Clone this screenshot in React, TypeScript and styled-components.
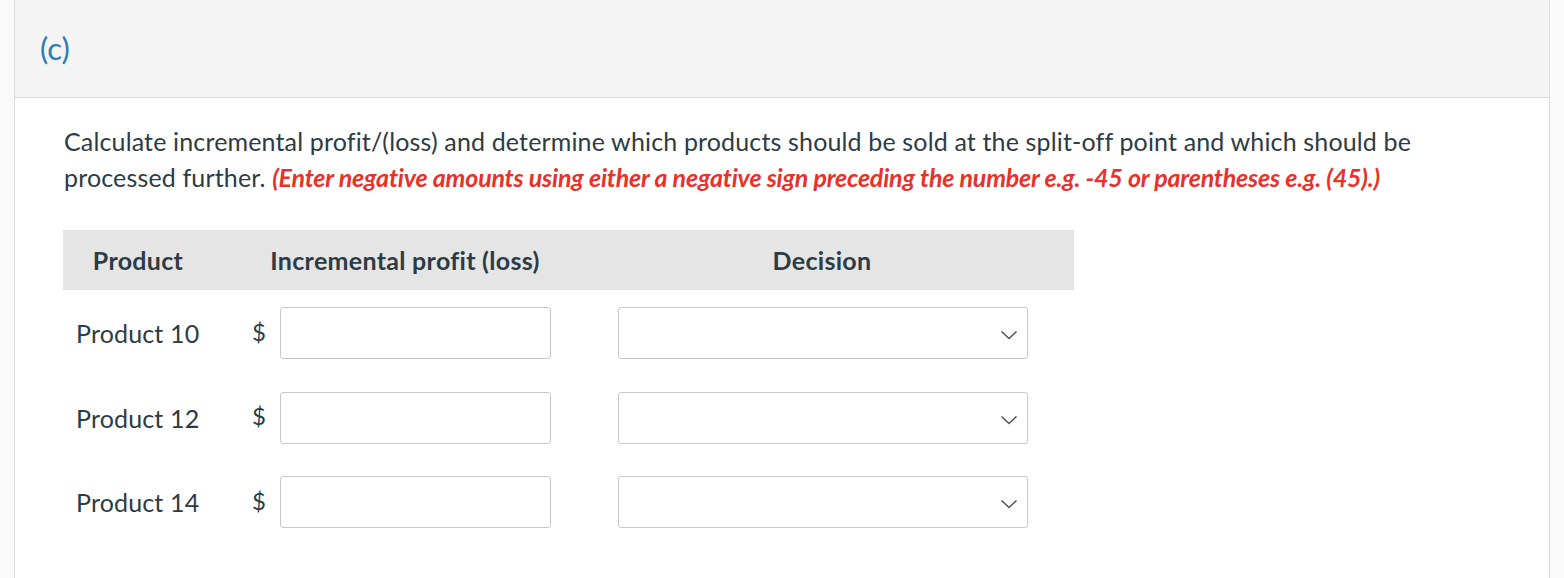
import React from "react";
import styled, { createGlobalStyle } from "styled-components";

const Global = createGlobalStyle`
  html, body { margin: 0; padding: 0; background: #fafafa; }
  body { font-family: Lato, "Open Sans", sans-serif; color: #2d3b45; }
`;

const Page = styled.div`
  padding-left: 14px;
  padding-right: 14px;
  height: 578px;
  box-sizing: border-box;
`;

const Card = styled.div`
  border-left: 1px solid #dcdcdc;
  border-right: 1px solid #dcdcdc;
  background: #fff;
  height: 100%;
`;

const Header = styled.div`
  background: #f4f4f4;
  border-bottom: 1px solid #dcdcdc;
  height: 98px;
  box-sizing: border-box;
  padding: 29px 0 0 25px;
`;

const PartLabel = styled.div`
  font-size: 31px;
  color: #2f7bb5;
  line-height: 38px;
`;

const Body = styled.div`
  padding: 25px 0 0 49px;
`;

const Prompt = styled.p`
  margin: 0;
  font-size: 25px;
  line-height: 36px;
  letter-spacing: 0.15px;
  max-width: 1420px;
  color: #2d3b45;
`;

const Note = styled.span`
  color: #e8312a;
  font-weight: 700;
  font-style: italic;
  letter-spacing: -0.2px;
`;

const Table = styled.div`
  margin-top: 35px;
  margin-left: -1px;
  width: 1011px;
  display: grid;
  grid-template-columns: 150px 384px 477px;
`;

const HeadCell = styled.div<{ $pr?: number }>`
  background: #e5e5e5;
  height: 60px;
  display: flex;
  align-items: center;
  justify-content: center;
  font-weight: 700;
  font-size: 25px;
  letter-spacing: 0.3px;
  padding-right: ${(p) => p.$pr ?? 0}px;
`;

const Cell = styled.div<{ $first?: boolean }>`
  display: flex;
  align-items: center;
  height: 52px;
  margin-top: ${(p) => (p.$first ? 17 : 32.5)}px;
`;

const ProductName = styled(Cell)`
  padding-left: 13px;
  font-size: 25px;
  letter-spacing: 0.15px;
`;

const Amount = styled(Cell)`
  padding-left: 39px;
  gap: 13px;
`;

const Dollar = styled.span`
  font-size: 24px;
  width: 15px;
  margin-top: -4px;
`;

const TextInput = styled.input`
  width: 271px;
  height: 52px;
  box-sizing: border-box;
  border: 1px solid #c8c8c8;
  border-radius: 3px;
  background: #fff;
  font-family: inherit;
  font-size: 20px;
  padding: 0 10px;
  outline: none;
`;

const SelectWrap = styled(Cell)`
  padding-left: 21px;
`;

const SelectBox = styled.div`
  position: relative;
  width: 410px;
  height: 52px;
  box-sizing: border-box;
  border: 1px solid #c8c8c8;
  border-radius: 3px;
  background: #fff;
`;

const Chevron = styled.svg`
  position: absolute;
  right: 9px;
  top: 22px;
`;

const rows = ["Product 10", "Product 12", "Product 14"];

export default function App() {
  return (
    <>
      <Global />
      <Page>
        <Card>
          <Header>
            <PartLabel>(c)</PartLabel>
          </Header>
          <Body>
            <Prompt>
              Calculate incremental profit/(loss) and determine which products
              should be sold at the split-off point and which should be
              processed further.{" "}
              <Note>
                (Enter negative amounts using either a negative sign preceding
                the number e.g. -45 or parentheses e.g. (45).)
              </Note>
            </Prompt>
            <Table>
              <HeadCell>Product</HeadCell>
              <HeadCell>Incremental profit (loss)</HeadCell>
              <HeadCell $pr={27}>Decision</HeadCell>
              {rows.map((r, i) => (
                <React.Fragment key={r}>
                  <ProductName $first={i === 0}>{r}</ProductName>
                  <Amount $first={i === 0}>
                    <Dollar>$</Dollar>
                    <TextInput type="text" aria-label={`${r} amount`} />
                  </Amount>
                  <SelectWrap $first={i === 0}>
                    <SelectBox>
                      <Chevron width="18" height="10" viewBox="0 0 18 10">
                        <path
                          d="M1.5 1.5 L9 8.5 L16.5 1.5"
                          fill="none"
                          stroke="#555"
                          strokeWidth="1.6"
                        />
                      </Chevron>
                    </SelectBox>
                  </SelectWrap>
                </React.Fragment>
              ))}
            </Table>
          </Body>
        </Card>
      </Page>
    </>
  );
}
